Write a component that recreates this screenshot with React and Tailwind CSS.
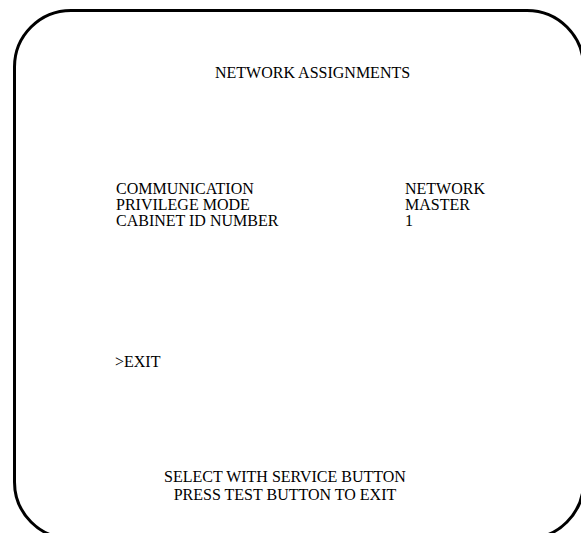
import React from "react";

const settings = [
  { label: "COMMUNICATION", value: "NETWORK" },
  { label: "PRIVILEGE MODE", value: "MASTER" },
  { label: "CABINET ID NUMBER", value: "1" },
];

export default function App() {
  return (
    <div className="w-[581px] h-[533px] overflow-hidden bg-white text-black font-['Liberation_Serif',serif] text-[16px]">
      <div className="ml-[13px] mt-[9px] w-[572px] h-[531px] border-[3px] border-black rounded-[58px] flex flex-col">
        {/* title */}
        <div className="mt-[53px] pl-[199px] leading-[16px]">NETWORK ASSIGNMENTS</div>

        {/* settings list */}
        <div className="mt-[100px] pl-[100px] grid grid-cols-[289px_1fr] leading-[16px]">
          {settings.map((s) => (
            <React.Fragment key={s.label}>
              <div>{s.label}</div>
              <div>{s.value}</div>
            </React.Fragment>
          ))}
        </div>

        <div className="mt-[125px] pl-[99px] leading-[16px]">&gt;EXIT</div>

        {/* footer */}
        <div className="mt-[98px] pr-[28px] text-center leading-[18px]">
          <div>SELECT WITH SERVICE BUTTON</div>
          <div>PRESS TEST BUTTON TO EXIT</div>
        </div>
      </div>
    </div>
  );
}
